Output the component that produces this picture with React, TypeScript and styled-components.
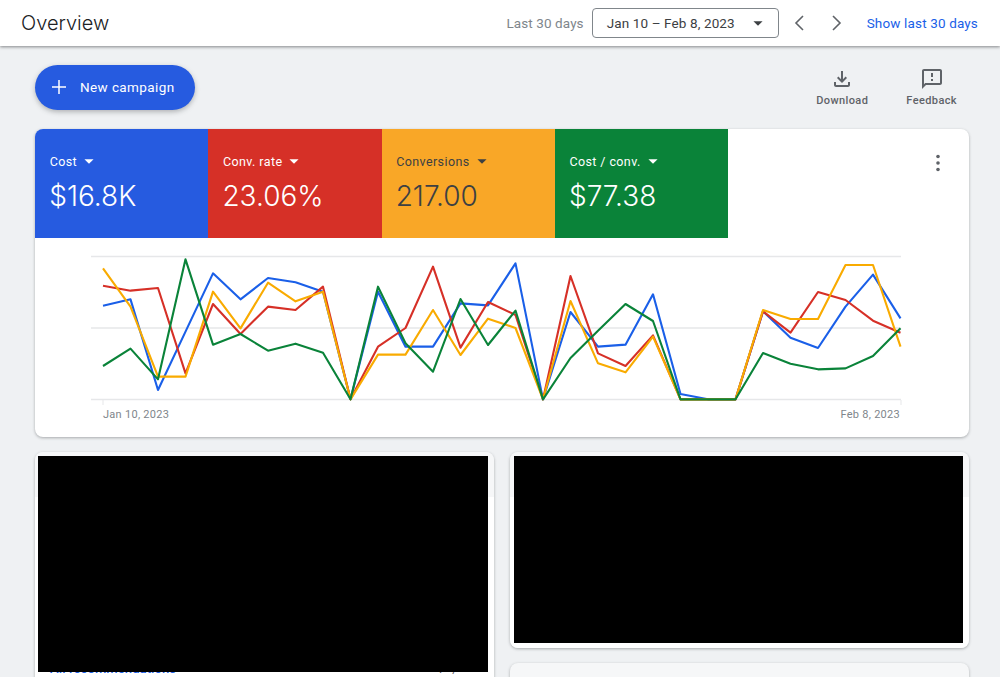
import styled, { createGlobalStyle } from 'styled-components'

const GlobalStyle = createGlobalStyle`
  html, body {
    margin: 0;
    height: 677px;
    overflow: hidden;
    background-color: #eff1f3;
    font-family: Roboto, "Liberation Sans", sans-serif;
  }
`

const Header = styled.header`
  height: 46px;
  box-sizing: border-box;
  padding: 0 22px 0 21px;
  display: flex;
  align-items: center;
  background-color: white;
  box-shadow: 0 1px 3px rgba(60, 64, 67, 0.6);
  position: relative;
`

const Title = styled.h1`
  margin: 0 auto 0 0;
  font-family: Inter, Roboto, sans-serif;
  font-size: 20px;
  font-weight: 300;
  color: #202124;
`

const RangeLabel = styled.span`
  font-size: 13.5px;
  letter-spacing: 0.1px;
  color: #80868b;
  margin-right: 8px;
`

const DateSelect = styled.div`
  width: 187px;
  height: 30px;
  box-sizing: border-box;
  padding: 0 9px 0 14px;
  display: flex;
  align-items: center;
  justify-content: space-between;
  border: 1px solid #80868b;
  border-radius: 4px;
  font-size: 13.5px;
  letter-spacing: 0.12px;
  color: #3c4043;
`

const Pager = styled.div`
  display: flex;
  gap: 10px;
  margin-left: 6px;
  color: #5f6368;
`

const ShowLink = styled.a`
  margin-left: 16px;
  font-size: 13.5px;
  letter-spacing: 0.15px;
  color: #1a5fe8;
`

const Main = styled.main`
  padding: 19px 31px 0 35px;
`

const Toolbar = styled.div`
  display: flex;
  align-items: flex-start;
  margin-bottom: 19px;
`

const CampaignButton = styled.button`
  width: 160px;
  height: 45px;
  padding: 0 0 2px 15px;
  display: flex;
  align-items: center;
  gap: 12px;
  border: none;
  border-radius: 23px;
  background-color: #265be0;
  box-shadow: 0 2px 5px rgba(60, 64, 67, 0.35);
  color: white;
  font-family: inherit;
  font-size: 13.5px;
  font-weight: 400;
  letter-spacing: 0.4px;
`

const Actions = styled.div`
  margin-left: auto;
  margin-right: 12px;
  padding-top: 2px;
  display: flex;
  gap: 38px;
`

const Action = styled.div`
  display: flex;
  flex-direction: column;
  align-items: center;
  gap: 3px;
  color: #5f6368;
  font-size: 11px;
  font-weight: 500;
  letter-spacing: 0.4px;
`

const Card = styled.section`
  background-color: white;
  border-radius: 8px;
  box-shadow: 0 1px 3px rgba(60, 64, 67, 0.4);
  overflow: hidden;
`

const Tiles = styled.div`
  display: flex;
  height: 109px;
`

const Tile = styled.div<{ $bg: string; $dark?: boolean }>`
  width: 173.25px;
  box-sizing: border-box;
  padding: 22px 0 0 14.7px;
  background-color: ${({ $bg }) => $bg};
  color: ${({ $dark }) => ($dark ? '#3c4043' : 'white')};
`

const TileLabel = styled.div`
  display: flex;
  align-items: center;
  gap: 1px;
  height: 20px;
  font-size: 12.5px;
  letter-spacing: 0.4px;
`

const TileValue = styled.div`
  margin-top: 8px;
  margin-left: -0.5px;
  font-family: Inter, Roboto, sans-serif;
  font-size: 28px;
  font-weight: 300;
  line-height: 34px;
`

const Menu = styled.div`
  margin-left: auto;
  padding: 22px 27px 0 0;
  color: #5f6368;
`

const ChartBox = styled.div`
  padding: 12px 0 0 56px;
`

const ChartSvg = styled.svg`
  display: block;
`

const AxisLabels = styled.div`
  display: flex;
  justify-content: space-between;
  padding: 3px 69px 15px 68px;
  font-size: 11px;
  line-height: 14px;
  letter-spacing: 0.28px;
  color: #80868b;
`

const Columns = styled.div`
  margin-top: 15px;
  display: grid;
  grid-template-columns: 459px 459px;
  gap: 16px;
  align-items: start;
`

const Stack = styled.div`
  display: flex;
  flex-direction: column;
  gap: 15px;
`

const Panel = styled(Card)<{ $inset?: number; $height?: number; $muted?: boolean }>`
  box-sizing: border-box;
  height: ${({ $height }) => ($height ? `${$height}px` : 'auto')};
  padding: 4px 6px 0 ${({ $inset }) => $inset ?? 3}px;
  background: ${({ $muted }) =>
    $muted ? '#f6f7f8' : 'linear-gradient(#f6f7f8 45px, white 45px)'};
`

// blacked out area of the original, sits on top of whatever is under it
const RedactedBlock = styled.div<{ $height: number }>`
  position: relative;
  z-index: 1;
  height: ${({ $height }) => $height}px;
  background-color: black;
`

const PanelFooter = styled.div`
  margin-top: -11px;
  height: 30px;
  padding: 0 18px 0 12px;
  display: flex;
  justify-content: space-between;
  font-size: 13px;
  line-height: 15px;
  letter-spacing: 0.1px;
`

const FooterLink = styled.a`
  color: #1a5fe8;
  font-weight: 500;
`

const FooterPager = styled.span`
  width: 46px;
  display: flex;
  justify-content: space-between;
  color: #5f6368;
`

const Caret = ({ size = 18 }: { size?: number }) => (
  <svg width={size} height={size} viewBox="0 0 24 24" fill="currentColor">
    <path d="M7 10l5 5 5-5z" />
  </svg>
)

const Chevron = ({ dir }: { dir: 'left' | 'right' }) => (
  <svg width="28" height="24" viewBox="0 0 28 24" fill="none" stroke="currentColor" strokeWidth="1.6">
    <polyline points={dir === 'left' ? '18,5 11,12 18,19' : '10,5 17,12 10,19'} />
  </svg>
)

const metrics = [
  { label: 'Cost', value: '$16.8K', bg: '#265be0' },
  { label: 'Conv. rate', value: '23.06%', bg: '#d63027' },
  { label: 'Conversions', value: '217.00', bg: '#f9a727', dark: true },
  { label: 'Cost / conv.', value: '$77.38', bg: '#0a8339' },
]

// y values read off the reference, in 1/3 px from y=240
const series = [
  {
    color: '#1a5fe8',
    values: [197, 178, 450, 275, 100, 178, 114, 127, 155, 478, 155, 320, 320, 190, 196, 70, 478, 216, 320, 314, 163, 462, 478, 478, 214, 293, 324, 200, 104, 235],
  },
  {
    color: '#d63027',
    values: [137, 152, 144, 400, 192, 282, 200, 210, 140, 478, 320, 264, 80, 323, 186, 225, 478, 108, 340, 378, 286, 478, 478, 478, 214, 278, 156, 180, 242, 278],
  },
  {
    color: '#f9ab00',
    values: [85, 200, 410, 410, 155, 265, 128, 184, 155, 478, 344, 344, 210, 345, 236, 264, 478, 183, 370, 397, 290, 478, 478, 478, 210, 237, 237, 75, 75, 320],
  },
  {
    color: '#0a8339',
    values: [378, 326, 418, 58, 314, 282, 332, 311, 338, 478, 140, 310, 395, 177, 315, 212, 478, 354, 272, 192, 243, 478, 478, 478, 339, 371, 388, 385, 348, 265],
  },
]

const CHART_TOP = 250
const CHART_LEFT = 91

const toPoints = (values: number[]) =>
  values
    .map((v, i) => `${103 + i * 27.5 - CHART_LEFT},${240 + v / 3 - CHART_TOP}`)
    .join(' ')

const Chart = () => (
  <ChartSvg width="812" height="155" viewBox="0 0 812 155">
    {[6.5, 78, 149.5].map((y) => (
      <line key={y} x1="0" x2="810" y1={y} y2={y} stroke="#e6e7e9" strokeWidth="1.4" />
    ))}
    <line x1="12" x2="12" y1="150" y2="155" stroke="#e6e7e9" />
    <line x1="810" x2="810" y1="150" y2="155" stroke="#e6e7e9" />
    {series.map((s) => (
      <polyline
        key={s.color}
        points={toPoints(s.values)}
        fill="none"
        stroke={s.color}
        strokeWidth="2.1"
        strokeLinejoin="round"
      />
    ))}
  </ChartSvg>
)

export default function App() {
  return (
    <>
      <GlobalStyle />
      <Header>
        <Title>Overview</Title>
        <RangeLabel>Last 30 days</RangeLabel>
        <DateSelect>
          Jan 10 – Feb 8, 2023
          <Caret size={22} />
        </DateSelect>
        <Pager>
          <Chevron dir="left" />
          <Chevron dir="right" />
        </Pager>
        <ShowLink>Show last 30 days</ShowLink>
      </Header>
      <Main>
        <Toolbar>
          <CampaignButton>
            <svg width="18" height="18" viewBox="0 0 18 18" stroke="currentColor" strokeWidth="1.5">
              <path d="M9 2v14M2 9h14" />
            </svg>
            New campaign
          </CampaignButton>
          <Actions>
            <Action>
              <svg width="24" height="24" viewBox="0 0 24 24" fill="currentColor">
                <path d="M18 15v3H6v-3H4v3c0 1.1.9 2 2 2h12c1.1 0 2-.9 2-2v-3h-2zm-1-4l-1.41-1.41L13 12.17V4h-2v8.17L8.41 9.59 7 11l5 5 5-5z" />
              </svg>
              Download
            </Action>
            <Action>
              <svg width="24" height="24" viewBox="0 0 24 24" fill="currentColor">
                <path d="M20 2H4c-1.1 0-1.99.9-1.99 2L2 22l4-4h14c1.1 0 2-.9 2-2V4c0-1.1-.9-2-2-2zm0 14H5.17L4 17.17V4h16v12zM11 12h2v2h-2zm0-6h2v4h-2z" />
              </svg>
              Feedback
            </Action>
          </Actions>
        </Toolbar>
        <Card>
          <Tiles>
            {metrics.map((m) => (
              <Tile key={m.label} $bg={m.bg} $dark={m.dark}>
                <TileLabel>
                  {m.label}
                  <Caret size={22} />
                </TileLabel>
                <TileValue>{m.value}</TileValue>
              </Tile>
            ))}
            <Menu>
              <svg width="8" height="24" viewBox="0 0 8 24" fill="currentColor">
                <circle cx="4" cy="5.5" r="1.8" />
                <circle cx="4" cy="12" r="1.8" />
                <circle cx="4" cy="18.5" r="1.8" />
              </svg>
            </Menu>
          </Tiles>
          <ChartBox>
            <Chart />
          </ChartBox>
          <AxisLabels>
            <span>Jan 10, 2023</span>
            <span>Feb 8, 2023</span>
          </AxisLabels>
        </Card>
        <Columns>
          <Panel>
            <RedactedBlock $height={216} />
            <PanelFooter>
              <FooterLink>All recommendations</FooterLink>
              <FooterPager>
                <span>‹</span>
                <span>1</span>
                <span>/</span>
                <span>›</span>
              </FooterPager>
            </PanelFooter>
          </Panel>
          <Stack>
            <Panel $inset={4} $height={196}>
              <RedactedBlock $height={187} />
            </Panel>
            <Panel $muted $height={60} />
          </Stack>
        </Columns>
      </Main>
    </>
  )
}
